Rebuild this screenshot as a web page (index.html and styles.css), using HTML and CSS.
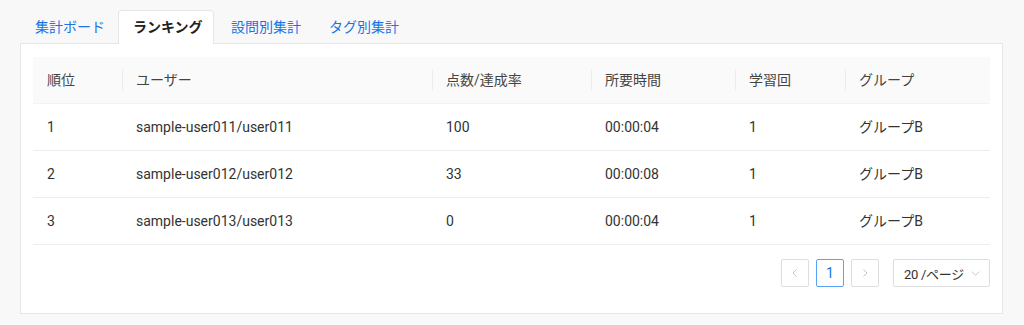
FILE: index.html
```html
<!DOCTYPE html>
<html lang="ja">
<head>
    <meta charset="UTF-8">
    <meta name="viewport" content="width=device-width, initial-scale=1.0">
    <title>ランキング</title>
    <link rel="stylesheet" href="styles.css">
</head>
<body>

<div class="tabs">
    <div class="tab-nav">
        <div class="tab">集計ボード</div>
        <div class="tab active">ランキング</div>
        <div class="tab">設問別集計</div>
        <div class="tab">タグ別集計</div>
    </div>
    <div class="tab-panel">
        <table class="ranking">
            <colgroup>
                <col style="width: 89px">
                <col style="width: 310px">
                <col style="width: 159px">
                <col style="width: 144px">
                <col style="width: 110px">
                <col>
            </colgroup>
            <thead>
                <tr>
                    <th>順位</th>
                    <th>ユーザー</th>
                    <th>点数/達成率</th>
                    <th>所要時間</th>
                    <th>学習回</th>
                    <th>グループ</th>
                </tr>
            </thead>
            <tbody>
                <tr>
                    <td>1</td>
                    <td>sample-user011/user011</td>
                    <td>100</td>
                    <td>00:00:04</td>
                    <td>1</td>
                    <td>グループB</td>
                </tr>
                <tr>
                    <td>2</td>
                    <td>sample-user012/user012</td>
                    <td>33</td>
                    <td>00:00:08</td>
                    <td>1</td>
                    <td>グループB</td>
                </tr>
                <tr>
                    <td>3</td>
                    <td>sample-user013/user013</td>
                    <td>0</td>
                    <td>00:00:04</td>
                    <td>1</td>
                    <td>グループB</td>
                </tr>
            </tbody>
        </table>

        <div class="pagination">
            <button class="page-btn disabled">
                <svg width="12" height="12" viewBox="0 0 12 12"><path d="M7.5 2.5 L4 6 L7.5 9.5" fill="none" stroke="currentColor" stroke-width="1"/></svg>
            </button>
            <button class="page-btn current">1</button>
            <button class="page-btn disabled">
                <svg width="12" height="12" viewBox="0 0 12 12"><path d="M4.5 2.5 L8 6 L4.5 9.5" fill="none" stroke="currentColor" stroke-width="1"/></svg>
            </button>
            <div class="size-select">
                <span>20 /ページ</span>
                <svg width="11" height="11" viewBox="0 0 12 12"><path d="M2 4 L6 8 L10 4" fill="none" stroke="currentColor" stroke-width="1"/></svg>
            </div>
        </div>
    </div>
</div>

</body>
</html>
```

FILE: styles.css
```css
body {
    font-family: Roboto, "Noto Sans CJK JP", sans-serif;
    font-size: 14px;
    color: #333;
    background-color: #f8f8f8;
    margin: 0;
    padding: 10px 21px 0 20px;
}
.tab-nav {
    display: flex;
    gap: 2px;
}
.tab {
    width: 96px;
    height: 33px;
    box-sizing: border-box;
    padding: 0 14px;
    line-height: 33px;
    color: #1a73e8;
    white-space: nowrap;
    border: 1px solid transparent;
    border-bottom: none;
    border-radius: 4px 4px 0 0;
}
.tab.active {
    background-color: white;
    border-color: #e6e6e6;
    color: #222;
    font-weight: bold;
    margin-bottom: -1px;
    height: 34px;
    position: relative;
}
.tab-panel {
    background-color: white;
    border: 1px solid #e6e6e6;
    padding: 13px 12px 26px 12px;
}
.ranking {
    width: 100%;
    border-collapse: collapse;
    table-layout: fixed;
}
.ranking th {
    background-color: #fafafa;
    font-weight: normal;
    color: #444;
    text-align: left;
    padding: 12px 14px;
    line-height: 22px;
    border-bottom: 1px solid #f3f3f3;
    position: relative;
}
.ranking th + th::before {
    content: "";
    position: absolute;
    left: 0;
    top: 12px;
    width: 1px;
    height: 22px;
    background-color: #ececec;
}
.ranking td {
    padding: 12px 14px;
    line-height: 22px;
    border-bottom: 1px solid #ededed;
    white-space: nowrap;
}
.pagination {
    display: flex;
    justify-content: flex-end;
    align-items: center;
    gap: 7px;
    margin-top: 14px;
}
.page-btn {
    width: 28px;
    height: 28px;
    padding: 0;
    font-family: inherit;
    font-size: 14px;
    background-color: white;
    border: 1px solid #dedede;
    border-radius: 2px;
    display: flex;
    align-items: center;
    justify-content: center;
}
.page-btn.disabled {
    color: #c4c4c4;
}
.page-btn.current {
    border-color: #5aa2f5;
    color: #1a73e8;
}
.size-select {
    margin-left: 7px;
    width: 97px;
    height: 28px;
    box-sizing: border-box;
    border: 1px solid #dedede;
    border-radius: 2px;
    display: flex;
    align-items: center;
    justify-content: space-between;
    padding: 0 8px 0 10px;
    font-size: 13px;
    letter-spacing: -0.3px;
    color: #333;
    white-space: nowrap;
}
.size-select svg {
    color: #c4c4c4;
}
```
